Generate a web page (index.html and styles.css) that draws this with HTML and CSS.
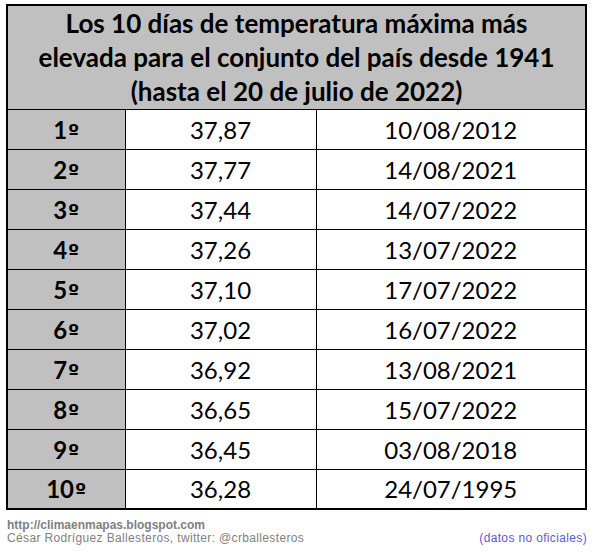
FILE: index.html
```html
<!DOCTYPE html>
<html lang="es">
<head>
    <meta charset="UTF-8">
    <title>Los 10 días de temperatura máxima</title>
    <link rel="stylesheet" href="styles.css">
</head>
<body>
    <div class="page">
        <table class="ranking">
            <tr>
                <th colspan="3" class="title">Los 10 días de temperatura máxima más<br>elevada para el conjunto del país desde 1941<br>(hasta el 20 de julio de 2022)</th>
            </tr>
            <tr><td class="pos">1<span class="ord">º</span></td><td>37,87</td><td>10/08/2012</td></tr>
            <tr><td class="pos">2<span class="ord">º</span></td><td>37,77</td><td>14/08/2021</td></tr>
            <tr><td class="pos">3<span class="ord">º</span></td><td>37,44</td><td>14/07/2022</td></tr>
            <tr><td class="pos">4<span class="ord">º</span></td><td>37,26</td><td>13/07/2022</td></tr>
            <tr><td class="pos">5<span class="ord">º</span></td><td>37,10</td><td>17/07/2022</td></tr>
            <tr><td class="pos">6<span class="ord">º</span></td><td>37,02</td><td>16/07/2022</td></tr>
            <tr><td class="pos">7<span class="ord">º</span></td><td>36,92</td><td>13/08/2021</td></tr>
            <tr><td class="pos">8<span class="ord">º</span></td><td>36,65</td><td>15/07/2022</td></tr>
            <tr><td class="pos">9<span class="ord">º</span></td><td>36,45</td><td>03/08/2018</td></tr>
            <tr><td class="pos">10<span class="ord">º</span></td><td>36,28</td><td>24/07/1995</td></tr>
        </table>

        <!-- pie con la fuente -->
        <div class="footer">
            <div class="credits">
                <div class="url">http://climaenmapas.blogspot.com</div>
                <div class="author">César Rodríguez Ballesteros, twitter: @crballesteros</div>
            </div>
            <div class="note">(datos no oficiales)</div>
        </div>
    </div>
</body>
</html>
```
FILE: styles.css
```css
* {
    margin: 0;
    padding: 0;
    box-sizing: border-box;
}

body {
    background: #fff;
    font-family: Lato, "Open Sans", sans-serif;
}

.page {
    width: 595px;
    padding: 4px 8px 0 6px;
}

.ranking {
    width: 581px;
    border-collapse: collapse;
    border: 2px solid #000;
    color: #000;
}

.ranking td,
.ranking th {
    border: 1px solid #000;
    text-align: center;
}

.title {
    background: #c0c0c0;
    height: 104px;
    font-size: 26px;
    font-weight: bold;
    line-height: 34px;
    padding: 0 10px;
    white-space: nowrap;
}

.ranking td {
    height: 40px;
    font-size: 24px;
    background: #fff;
}

.ranking td:nth-child(1) {
    width: 118px;
}

.ranking td:nth-child(2) {
    width: 191px;
}

.ranking td.pos {
    background: #c0c0c0;
    font-weight: bold;
}

/* el ordinal subrayado como en Calibri */
.ord {
    font-family: "DejaVu Sans", sans-serif;
    font-size: 20px;
    margin-left: 1px;
}

.footer {
    display: flex;
    justify-content: space-between;
    align-items: flex-end;
    margin-top: 9px;
    padding-left: 1px;
    font-family: "Liberation Sans", Arial, sans-serif;
    font-size: 12px;
    line-height: 13px;
    color: #808080;
    letter-spacing: 0.35px;
}

.url {
    font-weight: bold;
    letter-spacing: 0;
}

.note {
    color: #5a5ad0;
}
```
